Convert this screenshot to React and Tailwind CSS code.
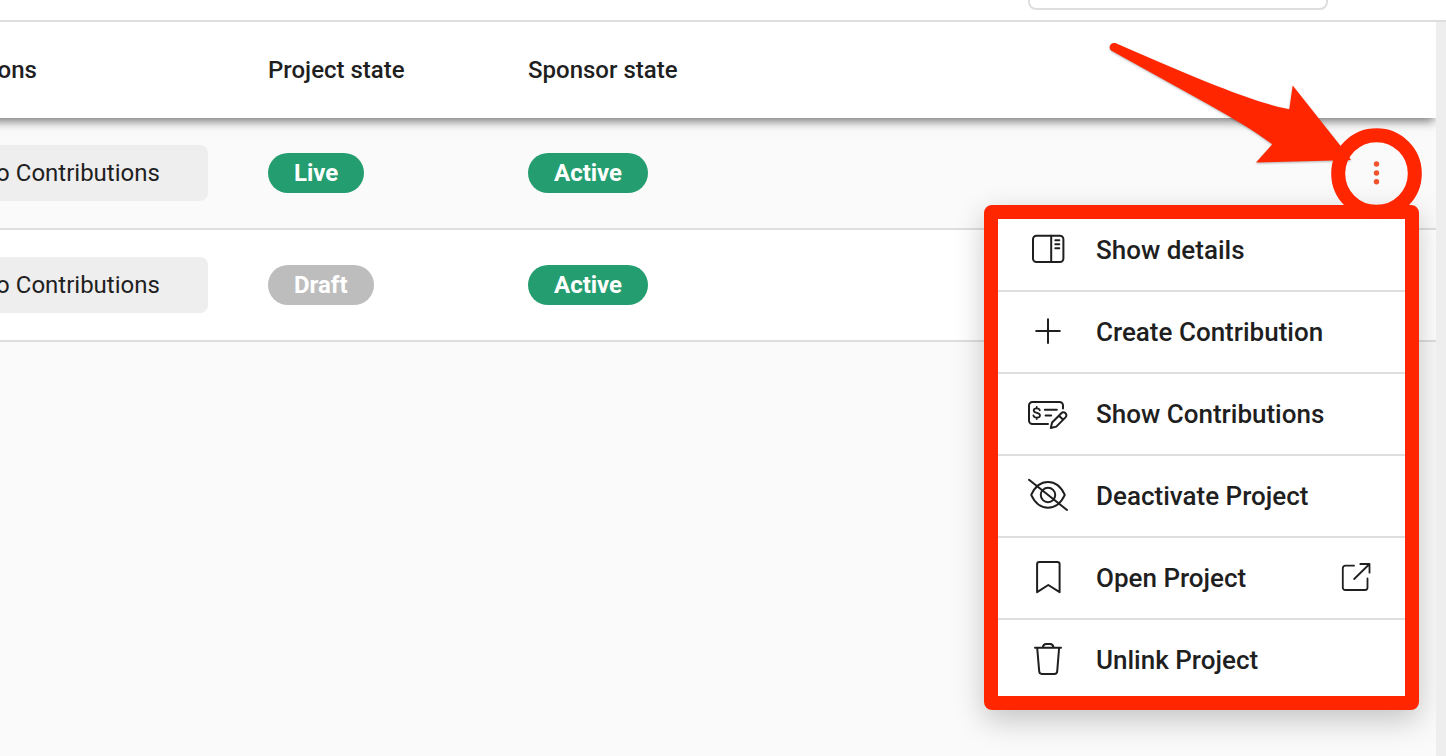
import { useState } from 'react';

const rows = [
  { id: 1, contributions: 'No Contributions', project: 'Live', sponsor: 'Active' },
  { id: 2, contributions: 'No Contributions', project: 'Draft', sponsor: 'Active' },
];

const badgeColors = {
  Live: 'bg-[#249d70]',
  Active: 'bg-[#249d70]',
  Draft: 'bg-[#bdbdbd]',
};

function Icon({ children }) {
  return (
    <svg
      viewBox="0 0 48 48"
      className="h-12 w-12 shrink-0"
      fill="none"
      stroke="currentColor"
      strokeWidth="2"
      strokeLinecap="round"
      strokeLinejoin="round"
      aria-hidden="true"
    >
      {children}
    </svg>
  );
}

const DetailsIcon = () => (
  <Icon>
    <rect x="9" y="9.7" width="30.4" height="26.4" rx="3.5" />
    <path d="M27.2 9.7v26.4M31.3 14.3h4M31.3 18.2h4M31.3 22.2h4" />
  </Icon>
);

const PlusIcon = () => (
  <Icon>
    <path d="M24 11.3v23.6M12.2 23.1h23.6" />
  </Icon>
);

const ChequeIcon = () => (
  <Icon>
    <path d="M24 34H8.5A3.5 3.5 0 0 1 5 30.500V15.500A3.500 3.500 0 0 1 8.500 12H35.500A3.500 3.500 0 0 1 39 15.500V18.500" />
    <path d="M20.800 19.800h12M21.600 25.400h5.600" />
    <path d="M15.800 20.300c-.3-1.300-1.500-2-3.100-2-1.800 0-3 .9-3 2.300 0 3.200 6.300 1.400 6.300 4.700 0 1.500-1.300 2.400-3.200 2.400-1.800 0-3.100-.8-3.400-2.300M12.700 17v1.300M12.700 27.700v1.300" strokeWidth="1.800" />
    <path d="M26.800 38l1.300-5.500L37.300 23.200a2.900 2.900 0 0 1 4.200 0 2.900 2.900 0 0 1 0 4.200L32.300 36.600zM35 25.600l4.100 4.100" />
  </Icon>
);

const EyeOffIcon = () => (
  <Icon>
    <path d="M7.200 22.900C10.800 15 16.500 10 24 10s13.200 5 16.800 12.900C37.200 30.800 31.500 35.700 24 35.700S10.800 30.800 7.200 22.900z" />
    <circle cx="24" cy="23" r="7.200" />
    <path d="M5 7.800L43 38" />
  </Icon>
);

const BookmarkIcon = () => (
  <Icon>
    <path d="M15.300 8H33.400a2.200 2.200 0 0 1 2.200 2.200V38.200L24.300 31 13.100 38.200V10.200A2.200 2.200 0 0 1 15.300 8z" />
  </Icon>
);

const TrashIcon = () => (
  <Icon>
    <path d="M11 11.700H37M18.700 11.300C19.300 8.900 20.200 8 22 8h4.300c1.800 0 2.700.9 3.300 3.300" />
    <path d="M13.200 12l2 23.300c.1 1.700 1.100 2.600 2.700 2.600h12.600c1.600 0 2.500-.9 2.700-2.600L35.100 12" />
  </Icon>
);

const ExternalIcon = () => (
  <svg
    viewBox="0 0 32 32"
    className="ml-auto h-8 w-8"
    fill="none"
    stroke="currentColor"
    strokeWidth="1.800"
    strokeLinecap="round"
    strokeLinejoin="round"
    aria-hidden="true"
  >
    <path d="M13 3.700H4.300A2.500 2.500 0 0 0 1.800 6.200V25.500A2.500 2.500 0 0 0 4.300 28H24A2.500 2.500 0 0 0 26.500 25.500V16.500" />
    <path d="M13.200 17L28.500 2M19.300 2h9.200v8.700" />
  </svg>
);

const menuItems = [
  { label: 'Show details', icon: DetailsIcon },
  { label: 'Create Contribution', icon: PlusIcon },
  { label: 'Show Contributions', icon: ChequeIcon },
  { label: 'Deactivate Project', icon: EyeOffIcon },
  { label: 'Open Project', icon: BookmarkIcon, external: true },
  { label: 'Unlink Project', icon: TrashIcon },
];

function Badge({ state }) {
  return (
    <span
      className={`inline-flex h-10 items-center rounded-full px-[26px] align-middle text-2xl font-bold text-white ${badgeColors[state]}`}
    >
      {state}
    </span>
  );
}

function ActionMenu() {
  return (
    <div className="absolute top-[77px] right-[11px] z-20 w-[407px] bg-white">
      <ul>
        {menuItems.map(({ label, icon: ItemIcon, external }) => (
          <li key={label} className="border-b-2 border-[#dedede] last:border-b-0">
            <button
              type="button"
              className="flex h-20 w-full items-center gap-6 pr-8 pl-[26px] text-left text-[26px] font-medium hover:bg-gray-50"
            >
              <ItemIcon />
              {label}
              {external && <ExternalIcon />}
            </button>
          </li>
        ))}
      </ul>
      {/* red frame */}
      <div className="pointer-events-none absolute -inset-x-[14px] -top-[5px] -bottom-[10px] rounded-lg border-[14px] border-[#ff2600] shadow-[0_10px_30px_rgba(0,0,0,0.22)]" />
    </div>
  );
}

// arrow + ring around the row action button
function Pointer() {
  return (
    <svg
      viewBox="0 0 320 182"
      className="pointer-events-none absolute -top-[93px] -right-[9px] z-30 h-[182px] w-[320px] max-w-none"
      aria-hidden="true"
    >
      <path
        d="M10.200 3.100C40 16 70 29 101.700 42C130 53 156 63.500 184.300 69.300L187.700 45.500L236 106.500L246 120L151 122.400L167.300 104.300C150 91.500 128 78 101.700 63.500L6.500 10.700A4.300 4.300 0 0 1 10.200 3.100Z"
        fill="#ff2600"
        className="drop-shadow-[0_1px_1px_rgba(0,0,0,0.3)]"
      />
      <circle cx="271.500" cy="133.500" r="38.300" fill="none" stroke="#ff2600" strokeWidth="14" />
    </svg>
  );
}

function RowActions() {
  const [open, setOpen] = useState(true);

  return (
    <div className="relative z-20 ml-auto h-20 w-20">
      <button
        type="button"
        aria-label="Project actions"
        aria-expanded={open}
        onClick={() => setOpen(!open)}
        className="flex h-full w-full items-center justify-center rounded-full"
      >
        <svg viewBox="0 0 48 48" className="h-12 w-12" fill="#f0532d" aria-hidden="true">
          <circle cx="24.500" cy="15" r="2.700" />
          <circle cx="24.500" cy="24" r="2.700" />
          <circle cx="24.500" cy="32.800" r="2.700" />
        </svg>
      </button>
      {open && <ActionMenu />}
      <Pointer />
    </div>
  );
}

export default function App() {
  return (
    <div className="flex min-h-screen flex-col overflow-hidden bg-[#fafafa] font-[Roboto,'Liberation_Sans',sans-serif] text-[#1f1f1f]">
      {/* toolbar */}
      <header className="flex h-[22px] items-end justify-end overflow-hidden border-b-2 border-[#dedede] bg-white pr-[118px] pb-[10px]">
        <input
          type="text"
          aria-label="Search"
          className="h-20 w-[300px] shrink-0 rounded-lg border-2 border-[#dedede] bg-white px-6 text-2xl"
        />
      </header>

      <main className="flex flex-1">
        <div className="min-w-0 flex-1 overflow-hidden">
          <table className="-ml-[45px] w-[calc(100%+45px)] table-fixed border-separate border-spacing-0 text-left text-2xl">
            <colgroup>
              <col className="w-[289px]" />
              <col className="w-[260px]" />
              <col className="w-[260px]" />
              <col />
            </colgroup>
            <thead className="relative z-10 bg-white shadow-[0_5px_10px_-2px_rgba(0,0,0,0.55)]">
              <tr className="h-24">
                <th className="font-medium">Actions</th>
                <th className="px-6 font-medium">Project state</th>
                <th className="px-6 font-medium">Sponsor state</th>
                <td />
              </tr>
            </thead>
            <tbody>
              {rows.map((row, index) => (
                <tr key={row.id} className="h-28 odd:bg-[#fafafa] even:bg-white">
                  <td className="border-b-2 border-[#dedede]">
                    <button
                      type="button"
                      className="flex h-14 w-[253px] items-center rounded-lg bg-[#eeeeee] px-6 text-left"
                    >
                      {row.contributions}
                    </button>
                  </td>
                  <td className="border-b-2 border-[#dedede] px-6">
                    <Badge state={row.project} />
                  </td>
                  <td className="border-b-2 border-[#dedede] px-6">
                    <Badge state={row.sponsor} />
                  </td>
                  <td className="border-b-2 border-[#dedede] pr-5">
                    {index === 0 && <RowActions />}
                  </td>
                </tr>
              ))}
            </tbody>
          </table>
        </div>
        {/* scrollbar track */}
        <div className="w-[10px] shrink-0 bg-[#eeeeee]" />
      </main>
    </div>
  );
}
